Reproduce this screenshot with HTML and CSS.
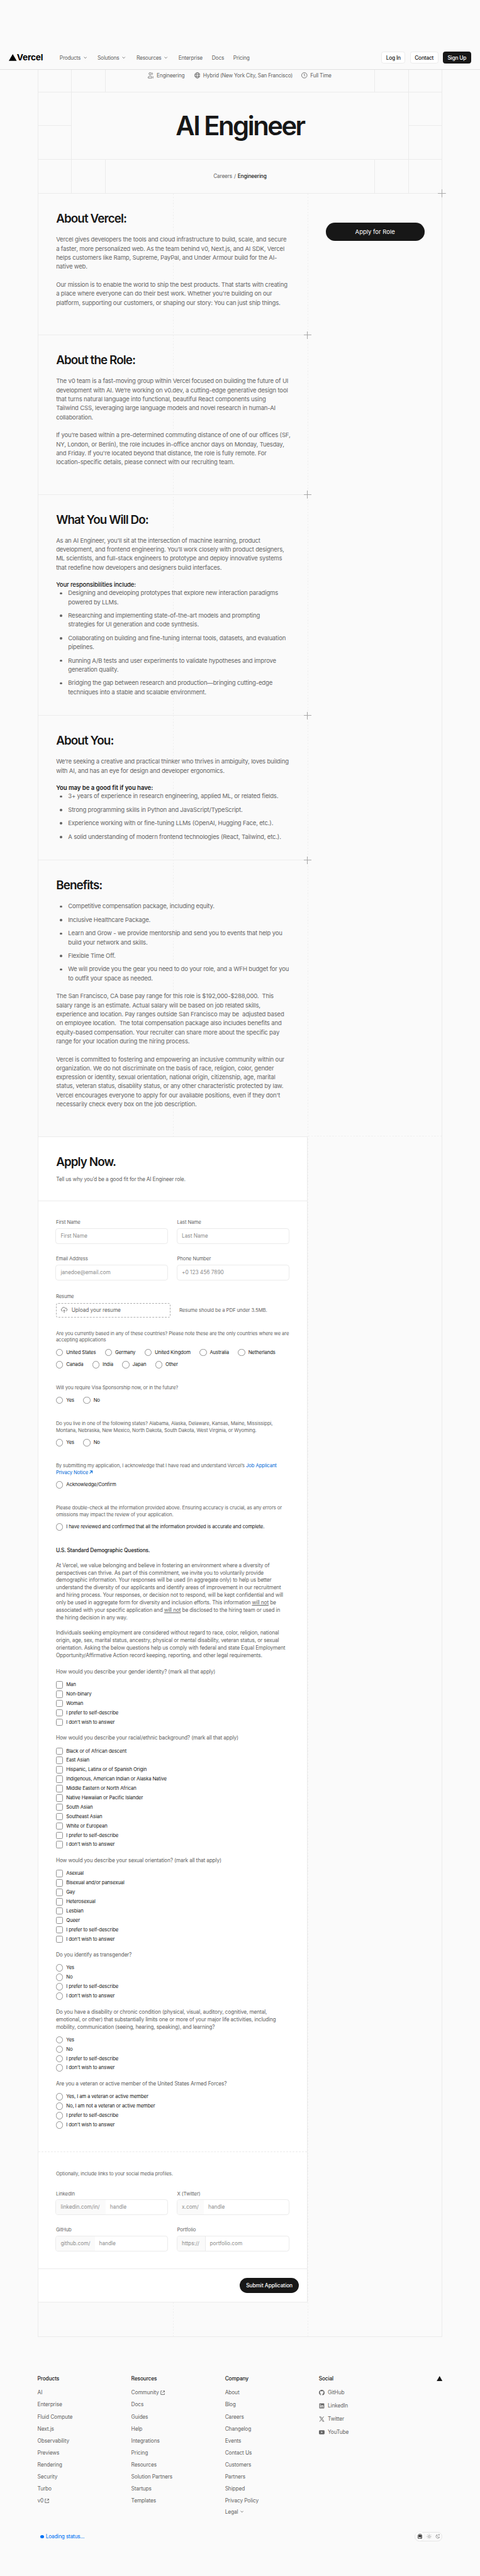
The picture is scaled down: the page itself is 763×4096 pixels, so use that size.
FILE: index.html
```html
<!DOCTYPE html>
<html lang="en">
<head>
<meta charset="utf-8">
<title>AI Engineer – Vercel</title>
<link rel="stylesheet" href="styles.css">
</head>
<body>
<div class="page">
<header class="nav">
  <a class="logo"><svg width="21" height="18" viewBox="0 0 21 18"><path d="M10.500 0L21 18H0z"/></svg><span class="wordmark">Vercel</span></a>
  <nav class="menu">
    <span class="drop w101">Products<svg width="9" height="6" viewBox="0 0 9 6"><path d="M1 1l3.500 3.500L8 1"/></svg></span>
    <span class="drop w104">Solutions<svg width="9" height="6" viewBox="0 0 9 6"><path d="M1 1l3.500 3.500L8 1"/></svg></span>
    <span class="drop w112">Resources<svg width="9" height="6" viewBox="0 0 9 6"><path d="M1 1l3.500 3.500L8 1"/></svg></span>
    <span class="w89">Enterprise</span><span class="w57">Docs</span><span>Pricing</span>
  </nav>
  <div class="actions"><a class="btn b1">Log In</a><a class="btn b2">Contact</a><a class="btn dark b3">Sign Up</a></div>
</header>

<div class="hero">
  <div class="row top"><i></i><i></i>
    <div class="meta">
      <svg width="16" height="16" viewBox="0 0 16 16"><circle cx="6" cy="3.700" r="2.900"/><path d="M10.600 1a2.900 2.900 0 010 5.500M.8 15.200v-1.400c0-2.400 2-3.800 5.200-3.800s5.200 1.400 5.200 3.800v1.400zM13 10.600c1.500.6 2.300 1.700 2.300 3.200v1.400h-1.600"/></svg><span class="m1">Engineering</span>
      <svg width="16" height="16" viewBox="0 0 16 16"><circle cx="8" cy="8" r="7.200"/><ellipse cx="8" cy="8" rx="3.300" ry="7.200"/><path d="M1.500 5.500h13M1.500 10.500h13"/></svg><span class="m2">Hybrid (New York City, San Francisco)</span>
      <svg width="16" height="16" viewBox="0 0 16 16"><circle cx="8" cy="8" r="7.200"/><path d="M8 3.500V8l2 2.500"/></svg><span>Full Time</span>
    </div><i></i><i></i></div>
  <div class="row mid"><div class="side"><i></i><i></i></div><h1>AI Engineer</h1><div class="side"><i></i><i></i></div></div>
  <div class="row low"><i></i><i></i><div class="crumb"><span>Careers</span><em>/</em><b>Engineering</b></div><i></i><i></i></div>
</div>

<main class="main">
  <span class="cross edge"></span>
  <div class="left">
    <section class="sec s1">
      <h2>About Vercel:</h2>
      <p>Vercel gives developers the tools and cloud infrastructure to build, scale, and secure<br>a faster, more personalized web. As the team behind v0, Next.js, and AI SDK, Vercel<br>helps customers like Ramp, Supreme, PayPal, and Under Armour build for the AI-<br>native web.</p>
      <p>Our mission is to enable the world to ship the best products. That starts with creating<br>a place where everyone can do their best work. Whether you're building on our<br>platform, supporting our customers, or shaping our story: You can just ship things.</p>
    </section>
    <section class="sec s2"><span class="cross"></span>
      <h2>About the Role:</h2>
      <p>The v0 team is a fast-moving group within Vercel focused on building the future of UI<br>development with AI. We’re working on v0.dev, a cutting-edge generative design tool<br>that turns natural language into functional, beautiful React components using<br>Tailwind CSS, leveraging large language models and novel research in human-AI<br>collaboration.</p>
      <p>If you’re based within a pre-determined commuting distance of one of our offices (SF,<br>NY, London, or Berlin), the role includes in-office anchor days on Monday, Tuesday,<br>and Friday. If you're located beyond that distance, the role is fully remote. For<br>location-specific details, please connect with our recruiting team.</p>
    </section>
    <section class="sec s3"><span class="cross"></span>
      <h2>What You Will Do:</h2>
      <p>As an AI Engineer, you'll sit at the intersection of machine learning, product<br>development, and frontend engineering. You’ll work closely with product designers,<br>ML scientists, and full-stack engineers to prototype and deploy innovative systems<br>that redefine how developers and designers build interfaces.</p>
      <h3 class="medium">Your responsibilities include:</h3>
      <ul><li>Designing and developing prototypes that explore new interaction paradigms<br>powered by LLMs.</li><li>Researching and implementing state-of-the-art models and prompting<br>strategies for UI generation and code synthesis.</li><li>Collaborating on building and fine-tuning internal tools, datasets, and evaluation<br>pipelines.</li><li>Running A/B tests and user experiments to validate hypotheses and improve<br>generation quality.</li><li>Bridging the gap between research and production—bringing cutting-edge<br>techniques into a stable and scalable environment.</li></ul>
    </section>
    <section class="sec s4"><span class="cross"></span>
      <h2>About You:</h2>
      <p>We’re seeking a creative and practical thinker who thrives in ambiguity, loves building<br>with AI, and has an eye for design and developer ergonomics.</p>
      <h3>You may be a good fit if you have:</h3>
      <ul><li>3+ years of experience in research engineering, applied ML, or related fields.</li><li>Strong programming skills in Python and JavaScript/TypeScript.</li><li>Experience working with or fine-tuning LLMs (OpenAI, Hugging Face, etc.).</li><li>A solid understanding of modern frontend technologies (React, Tailwind, etc.).</li></ul>
    </section>
    <section class="sec s5"><span class="cross"></span>
      <h2>Benefits:</h2>
      <ul class="gap"><li>Competitive compensation package, including equity.</li><li>Inclusive Healthcare Package.</li><li>Learn and Grow - we provide mentorship and send you to events that help you<br>build your network and skills.</li><li>Flexible Time Off.</li><li>We will provide you the gear you need to do your role, and a WFH budget for you<br>to outfit your space as needed.</li></ul>
      <p>The San Francisco, CA base pay range for this role is $192,000-$288,000. &nbsp;This<br>salary range is an estimate. Actual salary will be based on job related skills,<br>experience and location. Pay ranges outside San Francisco may be &nbsp;adjusted based<br>on employee location. &nbsp;The total compensation package also includes benefits and<br>equity-based compensation. Your recruiter can share more about the specific pay<br>range for your location during the hiring process.</p>
      <p>Vercel is committed to fostering and empowering an inclusive community within our<br>organization. We do not discriminate on the basis of race, religion, color, gender<br>expression or identity, sexual orientation, national origin, citizenship, age, marital<br>status, veteran status, disability status, or any other characteristic protected by law.<br>Vercel encourages everyone to apply for our available positions, even if they don't<br>necessarily check every box on the job description.</p>
    </section>

    <form class="card">
      <div class="card-head"><h2>Apply Now.</h2><p>Tell us why you’d be a good fit for the AI Engineer role.</p></div>
      <div class="card-body">
        <div class="fields">
          <label>First Name<span class="input"><span>First Name</span></span></label>
          <label>Last Name<span class="input"><span>Last Name</span></span></label>
          <label>Email Address<span class="input"><span>janedoe@email.com</span></span></label>
          <label>Phone Number<span class="input"><span>+0 123 456 7890</span></span></label>
        </div>
        <div class="resume-label">Resume</div>
        <div class="resume"><div class="upload"><svg width="17" height="17" viewBox="0 0 17 17"><path d="M4 11.300A3.500 3.500 0 012.400 4.800 4.700 4.700 0 0111 3.500a4 4 0 012.500 7.600M8.500 16V8.500M5.500 11l3-3 3 3"/></svg><span>Upload your resume</span></div><span class="note">Resume should be a PDF under 3.5MB.</span></div>
        <div class="ask">Are you currently based in any of these countries? Please note these are the only countries where we are<br>accepting applications</div>
        <div class="opts"><span class="o">United States</span><span class="o">Germany</span><span class="o">United Kingdom</span><span class="o">Australia</span><span class="o">Netherlands</span></div>
        <div class="opts second"><span class="o">Canada</span><span class="o">India</span><span class="o">Japan</span><span class="o">Other</span></div>
        <div class="ask more">Will you require Visa Sponsorship now, or in the future?</div>
        <div class="opts"><span class="o">Yes</span><span class="o">No</span></div>
        <div class="ask more">Do you live in one of the following states? Alabama, Alaska, Delaware, Kansas, Maine, Mississippi,<br>Montana, Nebraska, New Mexico, North Dakota, South Dakota, West Virginia, or Wyoming.</div>
        <div class="opts"><span class="o">Yes</span><span class="o">No</span></div>
        <div class="ask more">By submitting my application, I acknowledge that I have read and understand Vercel’s <a>Job Applicant<br>Privacy Notice <svg width="9" height="9" viewBox="0 0 9 9"><path d="M1.500 1.200h6.300v6.300M7.800 1.200L1 8"/></svg></a></div>
        <div class="opts"><span class="o">Acknowledge/Confirm</span></div>
        <div class="ask more">Please double-check all the information provided above. Ensuring accuracy is crucial, as any errors or<br>omissions may impact the review of your application.</div>
        <div class="opts"><span class="o">I have reviewed and confirmed that all the information provided is accurate and complete.</span></div>
        <div class="demo">
          <h4>U.S. Standard Demographic Questions.</h4>
          <p>At Vercel, we value belonging and believe in fostering an environment where a diversity of<br>perspectives can thrive. As part of this commitment, we invite you to voluntarily provide<br>demographic information. Your responses will be used (in aggregate only) to help us better<br>understand the diversity of our applicants and identify areas of improvement in our recruitment<br>and hiring process. Your responses, or decision not to respond, will be kept confidential and will<br>only be used in aggregate form for diversity and inclusion efforts. This information <u>will not</u> be<br>associated with your specific application and <u>will not</u> be disclosed to the hiring team or used in<br>the hiring decision in any way.</p>
          <p>Individuals seeking employment are considered without regard to race, color, religion, national<br>origin, age, sex, marital status, ancestry, physical or mental disability, veteran status, or sexual<br>orientation. Asking the below questions help us comply with federal and state Equal Employment<br>Opportunity/Affirmative Action record keeping, reporting, and other legal requirements.</p>
          <div class="q first">How would you describe your gender identity? (mark all that apply)</div>
          <div class="list sq"><span class="o">Man</span><span class="o">Non-binary</span><span class="o">Woman</span><span class="o">I prefer to self-describe</span><span class="o">I don't wish to answer</span></div>
          <div class="q">How would you describe your racial/ethnic background? (mark all that apply)</div>
          <div class="list sq"><span class="o">Black or of African descent</span><span class="o">East Asian</span><span class="o">Hispanic, Latinx or of Spanish Origin</span><span class="o">Indigenous, American Indian or Alaska Native</span><span class="o">Middle Eastern or North African</span><span class="o">Native Hawaiian or Pacific Islander</span><span class="o">South Asian</span><span class="o">Southeast Asian</span><span class="o">White or European</span><span class="o">I prefer to self-describe</span><span class="o">I don't wish to answer</span></div>
          <div class="q">How would you describe your sexual orientation? (mark all that apply)</div>
          <div class="list sq"><span class="o">Asexual</span><span class="o">Bisexual and/or pansexual</span><span class="o">Gay</span><span class="o">Heterosexual</span><span class="o">Lesbian</span><span class="o">Queer</span><span class="o">I prefer to self-describe</span><span class="o">I don't wish to answer</span></div>
          <div class="q">Do you identify as transgender?</div>
          <div class="list"><span class="o">Yes</span><span class="o">No</span><span class="o">I prefer to self-describe</span><span class="o">I don't wish to answer</span></div>
          <div class="q">Do you have a disability or chronic condition (physical, visual, auditory, cognitive, mental,<br>emotional, or other) that substantially limits one or more of your major life activities, including<br>mobility, communication (seeing, hearing, speaking), and learning?</div>
          <div class="list"><span class="o">Yes</span><span class="o">No</span><span class="o">I prefer to self-describe</span><span class="o">I don't wish to answer</span></div>
          <div class="q">Are you a veteran or active member of the United States Armed Forces?</div>
          <div class="list"><span class="o">Yes, I am a veteran or active member</span><span class="o">No, I am not a veteran or active member</span><span class="o">I prefer to self-describe</span><span class="o">I don't wish to answer</span></div>
        </div>
      </div>
      <div class="card-social">
        <div class="ask">Optionally, include links to your social media profiles.</div>
        <div class="fields">
          <label>LinkedIn<span class="input"><span class="pre p1">linkedin.com/in/</span><span>handle</span></span></label>
          <label>X (Twitter)<span class="input"><span class="pre p2">x.com/</span><span>handle</span></span></label>
          <label>GitHub<span class="input"><span class="pre p3">github.com/</span><span>handle</span></span></label>
          <label>Portfolio<span class="input"><span class="pre p4">https://</span><span>portfolio.com</span></span></label>
        </div>
      </div>
      <div class="card-foot"><a class="pill submit">Submit Application</a></div>
    </form>
  </div>
  <aside class="aside"><a class="pill apply">Apply for Role</a></aside>
</main>

<footer class="footer">
  <div class="cols">
    <div class="col"><h5>Products</h5><a>AI</a><a>Enterprise</a><a>Fluid Compute</a><a>Next.js</a><a>Observability</a><a>Previews</a><a>Rendering</a><a>Security</a><a>Turbo</a><a>v0 <svg class="ext" width="12" height="12" viewBox="0 0 12 12"><path d="M4.500 1.200H1.200v9.600h9.600V7.500M7 1.200h3.800V5M10.800 1.200L5.500 6.500"/></svg></a></div>
    <div class="col"><h5>Resources</h5><a>Community <svg class="ext" width="12" height="12" viewBox="0 0 12 12"><path d="M4.500 1.200H1.200v9.600h9.600V7.500M7 1.200h3.800V5M10.800 1.200L5.500 6.500"/></svg></a><a>Docs</a><a>Guides</a><a>Help</a><a>Integrations</a><a>Pricing</a><a>Resources</a><a>Solution Partners</a><a>Startups</a><a>Templates</a></div>
    <div class="col"><h5>Company</h5><a>About</a><a>Blog</a><a>Careers</a><a>Changelog</a><a>Events</a><a>Contact Us</a><a>Customers</a><a>Partners</a><a>Shipped</a><a>Privacy Policy</a><a class="legal">Legal <svg width="9" height="6" viewBox="0 0 9 6"><path d="M1 1l3.500 3.500L8 1"/></svg></a></div>
    <div class="col social"><h5>Social</h5>
      <a><svg width="15" height="15" viewBox="0 0 16 16"><path d="M8 0C3.580 0 0 3.580 0 8c0 3.540 2.290 6.530 5.470 7.590.4.070.55-.17.55-.38 0-.19-.01-.82-.01-1.490-2.010.37-2.530-.49-2.690-.94-.09-.23-.48-.94-.82-1.130-.28-.15-.68-.52-.01-.53.63-.01 1.080.58 1.230.82.72 1.210 1.870.87 2.330.66.070-.52.28-.87.51-1.070-1.780-.2-3.640-.89-3.640-3.950 0-.87.31-1.590.82-2.150-.08-.2-.36-1.020.080-2.120 0 0 .67-.21 2.200.82a7.600 7.600 0 014 0c1.530-1.040 2.200-.82 2.200-.82.44 1.100.16 1.920.080 2.120.51.56.82 1.270.82 2.150 0 3.070-1.870 3.750-3.650 3.950.29.25.54.73.54 1.480 0 1.070-.01 1.930-.01 2.200 0 .21.15.46.55.38A8.010 8.010 0 0016 8c0-4.420-3.580-8-8-8z"/></svg>GitHub</a>
      <a><svg width="15" height="15" viewBox="0 0 16 16"><path fill-rule="evenodd" d="M2 1h12a1 1 0 011 1v12a1 1 0 01-1 1H2a1 1 0 01-1-1V2a1 1 0 011-1zm1.200 5.200v6.600h2V6.200zm1-3.200a1.200 1.200 0 100 2.400 1.200 1.200 0 000-2.400zm2.300 3.200v6.600h2V9.300c0-1.800 2.200-1.800 2.200 0v3.500h2V8.700c0-3-3.100-3.300-4.200-1.600v-.9z"/></svg>LinkedIn</a>
      <a><svg width="15" height="15" viewBox="0 0 16 16"><path fill-rule="evenodd" d="M.8 1h4.700l3.300 4.500L12.800 1h1.700L9.600 6.600l5.700 8.400h-4.700L7 9.900 2.600 15H.9l5.300-6.200zm2.300 1.200l8.100 11.500h1.800L5 2.200z"/></svg>Twitter</a>
      <a><svg width="15" height="15" viewBox="0 0 16 16"><path fill-rule="evenodd" d="M2.500 2.300h11A2.500 2.500 0 0116 4.800v6.400a2.500 2.500 0 01-2.500 2.500h-11A2.500 2.500 0 010 11.200V4.800a2.500 2.500 0 012.500-2.500zM6.400 5.500v5l4.200-2.500z"/></svg>YouTube</a>
    </div>
    <svg class="tri" width="16" height="14" viewBox="0 0 16 14"><path d="M8 0l8 14H0z"/></svg>
  </div>
  <div class="bottom">
    <span class="status"><i></i>Loading status...</span>
    <span class="theme">
      <b><svg width="12" height="13" viewBox="0 0 12 13"><path d="M1 12V3.500L3 1h6l2 2.500V12zM3.500 4h5v4h-5z"/><path class="solid" d="M3 3.500h6v4H3zM7 9.500h2.500V11H7z"/></svg></b>
      <svg width="14" height="14" viewBox="0 0 14 14"><circle cx="7" cy="7" r="2.700"/><path d="M7 .3v1.600M7 12.100v1.600M.3 7h1.600M12.100 7h1.600M2.300 2.300l1 1M10.700 10.700l1 1M2.300 11.700l1-1M10.700 3.300l1-1"/></svg>
      <svg width="13" height="13" viewBox="0 0 13 13"><path d="M5 1.800A5.200 5.200 0 1011.600 8.600 5 5 0 015 1.800zM9.700.5v4M7.700 2.500h4"/></svg>
    </span>
  </div>
</footer>
</div>
</body>
</html>
```
FILE: styles.css
```css
* { box-sizing: border-box; }
html, body { margin: 0; padding: 0; background: #fafafa; }
body { overflow-x: hidden; }
.page {
  zoom: 0.5962; width: 1279.7px; height: 6869px; overflow: hidden; padding-top: 122px;
  font-family: Inter, "Liberation Sans", sans-serif; font-size: 14px; color: #666; white-space: nowrap;
}
h1, h2, h3, h4, h5, p, ul { margin: 0; padding: 0; }
i, em { font-style: normal; }
svg { flex: none; }

.nav { height: 65px; border-bottom: 1px solid #e0e0e0; display: flex; align-items: center; padding: 0 24px; }
.logo { display: flex; align-items: center; width: 135px; color: #000; }
.wordmark { font-size: 23px; font-weight: 700; letter-spacing: -0.35px; line-height: 24px; }
.menu { display: flex; flex: 1; letter-spacing: -0.35px; }
.drop svg { margin-left: 8px; vertical-align: 2px; }
.drop svg path, .legal svg path { fill: none; stroke: #666; stroke-width: 1.5; }
.w101 { width: 101px; } .w104 { width: 104px; } .w112 { width: 112px; } .w89 { width: 89px; } .w57 { width: 57px; }
.actions { display: flex; gap: 12px; }
.btn { height: 33px; border-radius: 6px; background: #fff; border: 1px solid #ebebeb; color: #171717; font-weight: 500; display: flex; align-items: center; justify-content: center; letter-spacing: -0.35px; }
.b1 { width: 64px; } .b2 { width: 76px; } .b3 { width: 75px; }
.btn.dark { background: #171717; border-color: #171717; color: #fff; }

.hero { width: 1080px; margin: 0 auto; border: solid #ebebeb; border-width: 0 1px; }
.row { display: flex; border-bottom: 1px solid #ebebeb; }
.row.top { height: 59px; } .row.mid { height: 180px; } .row.low { height: 90px; }
.row > i { width: 90px; border-right: 1px solid #ebebeb; }
.row > div + i { border-right: 0; border-left: 1px solid #ebebeb; }
.row > div + i + i { border-right: 0; border-left: 1px solid #ebebeb; }
.meta { flex: 1; display: flex; align-items: center; height: 28px; padding-left: 112px; letter-spacing: -0.38px; }
.meta svg { fill: none; stroke: #666; stroke-width: 1.5; margin-right: 8px; }
.m1 { width: 100px; } .m2 { width: 262px; }
.side { width: 90px; display: flex; flex-direction: column; border-right: 1px solid #ebebeb; }
h1 + .side { border-right: 0; border-left: 1px solid #ebebeb; }
.side i { flex: 1; }
.side i:first-child { border-bottom: 1px solid #ebebeb; }
h1 { flex: 1; text-align: center; font-size: 70px; line-height: 178px; font-weight: 600; letter-spacing: -4.15px; color: #171717; }
.crumb { flex: 1; display: flex; align-items: center; justify-content: center; letter-spacing: -0.3px; }
.crumb em { margin: 0 5px; }
.crumb b { font-weight: 500; color: #171717; letter-spacing: -0.25px; }

.main {
  width: 1080px; height: 5716.500px; margin: 0 auto; display: flex; position: relative;
  border: solid #ebebeb; border-width: 0 1px 2px;
  background:
    repeating-linear-gradient(#efefef 0 4px, transparent 4px 8px) 359px 0 / 1.7px 100% no-repeat,
    repeating-linear-gradient(#efefef 0 4px, transparent 4px 8px) 718px 0 / 1.7px 100% no-repeat,
    repeating-linear-gradient(90deg, #efefef 0 4px, transparent 4px 8px) 720px 2513px / 360px 1.7px no-repeat;
}
.left { width: 718.500px; flex: none; }
.cross { position: absolute; right: -10.500px; top: -11px; width: 21px; height: 21px; background: linear-gradient(#a8a8a8, #a8a8a8) center / 1.7px 100% no-repeat, linear-gradient(#a8a8a8, #a8a8a8) center / 100% 1.7px no-repeat; }
.cross.edge { right: -11px; top: -11px; }
.sec { position: relative; padding: 47px 0 0 48px; font-size: 16px; line-height: 24px; border-top: 1px solid #ededed; letter-spacing: -0.27px; }
.s1 { height: 376.800px; border-top: 0; padding-top: 48px; } .s2 { height: 425px; } .s3 { height: 589.700px; } .s4 { height: 385.700px; } .s5 { height: 737px; }
h2 { font-size: 31.500px; line-height: 40px; height: 40px; font-weight: 600; color: #171717; letter-spacing: -1.45px; }
.sec p { margin-top: 24px; }
h3 { margin-top: 24px; height: 20px; line-height: 20px; font-size: 16px; color: #171717; font-weight: 600; letter-spacing: -0.03px; }
h3.medium { font-weight: 500; letter-spacing: -0.21px; }
ul { list-style: none; }
ul.gap { margin-top: 24px; }
li { position: relative; padding-left: 32px; }
li + li { margin-top: 12px; }
li::before { content: ""; position: absolute; left: 10px; top: 9px; width: 6px; height: 6px; border-radius: 50%; background: #666; }
.aside { flex: 1; padding: 78px 0 0 48.500px; }
.pill { background: #171717; color: #fff; display: flex; align-items: center; justify-content: center; border-radius: 24px; }
.apply { width: 263px; height: 49px; font-size: 16px; letter-spacing: -0.02px; }

.card { background: #fff; width: 719.500px; height: 3109.800px; border: 1px solid #ebebeb; border-left: 0; font-size: 13px; letter-spacing: -0.24px; }
.card-head { height: 171.500px; padding: 47px 0 0 48px; border-bottom: 1px solid #ebebeb; }
.card-head p { font-size: 14px; line-height: 24px; margin-top: 15px; letter-spacing: -0.27px; }
.card-body { padding: 49.700px 0 0 47.600px; height: 2535px; }
.fields { display: grid; grid-template-columns: 300px 301px; column-gap: 23px; row-gap: 32.200px; margin-left: -1px; }
label { display: block; line-height: 16px; text-indent: 1px; font-size: 13px; letter-spacing: -0.15px; }
.input { display: flex; align-items: center; margin-top: 7px; height: 42px; border: 1px solid #ebebeb; border-radius: 7px; font-size: 14px; color: #8f8f8f; text-indent: 0; overflow: hidden; padding-left: 12px; letter-spacing: -0.05px; }
.resume-label { line-height: 16px; margin-top: 35px; }
.resume { display: flex; margin-top: 8.500px; align-items: center; }
.upload { width: 305px; height: 39.500px; border: 1px dashed #b0b0b0; border-radius: 6px; display: flex; align-items: center; font-size: 14px; padding-left: 12px; letter-spacing: -0.15px; }
.upload svg { fill: none; stroke: #666; stroke-width: 1.5; margin-right: 11px; }
.note { margin-left: 24px; letter-spacing: -0.15px; }
.ask { line-height: 18px; margin-top: 32.500px; margin-bottom: 16.500px; }
.ask.more { margin-top: 44.200px; }
.ask a { color: #0068d6; }
.ask a svg { fill: none; stroke: #0068d6; stroke-width: 1.8; }
.opts { display: flex; gap: 24px; height: 16px; }
.second { margin-top: 17px; }
.o { display: flex; align-items: center; color: #171717; line-height: 16px; }
.o::before { content: ""; width: 16px; height: 16px; margin-right: 8px; border: 1px solid #8f8f8f; border-radius: 50%; flex: none; }
.sq .o::before { border-radius: 4px; }
.demo { font-size: 14px; line-height: 20px; padding-top: 45px; letter-spacing: -0.275px; }
h4 { font-size: 14px; font-weight: 500; color: #171717; }
.demo p { margin-top: 20px; }
.q { margin: 20.900px 0 11.100px; }
.q.first { margin-top: 24px; }
.list { display: grid; grid-auto-rows: 25px; font-size: 13px; letter-spacing: -0.24px; }
.card-social { height: 313px; border-top: 1px dashed #ebebeb; border-bottom: 1px solid #ebebeb; padding: 48px 0 0 47.600px; }
.card-social .ask { margin: 0 0 37px; }
.pre { background: #fafafa; align-self: stretch; display: flex; align-items: center; margin-left: -12px; padding-left: 12px; margin-right: 11.500px; }
.p1 { width: 132px; } .p2 { width: 71px; } .p3 { width: 103px; } .p4 { width: 75px; border-right: 1px solid #ebebeb; }
.card-foot { padding: 24px 23px 0 0; display: flex; justify-content: flex-end; }
.submit { width: 156.500px; height: 40.500px; font-size: 14px; font-weight: 500; letter-spacing: -0.11px; border-radius: 20px; }

.footer { width: 1080px; margin: 0 auto; }
.cols { display: flex; padding-top: 102.500px; height: 510px; position: relative; }
.col { width: 250px; display: flex; flex-direction: column; letter-spacing: -0.2px; }
.col.social { flex: 1; }
h5 { font-size: 14px; line-height: 20px; font-weight: 500; color: #171717; margin-bottom: 11px; }
.col a { height: 32px; line-height: 32px; }
.col a.legal { line-height: 30px; }
.legal svg { vertical-align: 2px; margin-left: 2px; }
.ext { fill: none; stroke: #666; stroke-width: 1.5; vertical-align: -1px; }
.social a { height: 35px; display: flex; align-items: center; line-height: 20px; }
.social a svg { fill: #666; margin-right: 9px; }
.social h5 { margin-bottom: 9.500px; }
.tri { fill: #171717; margin-top: 1px; }
.bottom { display: flex; justify-content: space-between; align-items: center; height: 26px; margin-top: 9.500px; }
.status { color: #0072f5; display: flex; align-items: center; padding-left: 8px; letter-spacing: -0.35px; }
.status i { width: 9px; height: 9px; border-radius: 50%; background: #0072f5; margin-right: 5px; }
.theme { width: 74px; height: 26px; border: 1px solid #e6e6e6; border-radius: 13px; display: flex; align-items: center; gap: 11px; }
.theme b { width: 24px; height: 24px; border-radius: 50%; background: #fff; box-shadow: 0 0 0 1px #ebebeb; display: flex; align-items: center; justify-content: center; margin-right: -6px; }
.theme svg { fill: none; stroke: #8f8f8f; stroke-width: 1.4; }
.theme b svg { stroke: #171717; }
.theme .solid { fill: #171717; stroke: none; }
```
